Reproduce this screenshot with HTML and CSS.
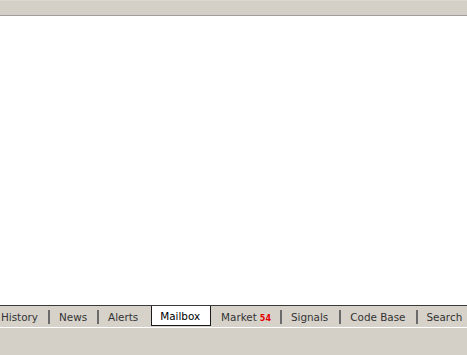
FILE: index.html
```html
<!DOCTYPE html>
<html>
<head>
<meta charset="utf-8">
<link rel="stylesheet" href="styles.css">
</head>
<body>
<div class="window">
  <div class="topbar"></div>
  <div class="content"></div>
  <div class="tabstrip">
    <span class="tab first">History</span>
    <span class="sep"></span>
    <span class="tab">News</span>
    <span class="sep"></span>
    <span class="tab alerts">Alerts</span>
    <span class="tab active">Mailbox</span>
    <span class="tab market">Market<span class="badge">54</span></span>
    <span class="sep"></span>
    <span class="tab signals">Signals</span>
    <span class="sep"></span>
    <span class="tab">Code Base</span>
    <span class="sep"></span>
    <span class="tab">Search</span>
  </div>
  <div class="bottom"></div>
</div>
</body>
</html>
```

FILE: styles.css
```css
html, body {
  margin: 0;
  padding: 0;
  height: 100%;
  overflow: hidden;
}
body {
  font-family: "DejaVu Sans", sans-serif;
  font-size: 10.4px;
  background: #d4d0c8;
}
.window {
  display: flex;
  flex-direction: column;
  height: 355px;
}
.topbar {
  height: 14px;
  background: #d4d0c8;
  border-top: 1px solid #dcd8d0;
  border-bottom: 1px solid #a09e9a;
}
.content {
  flex: 1;
  background: #ffffff;
}
.tabstrip {
  display: flex;
  align-items: center;
  height: 21px;
  border-top: 1px solid #3a3a3a;
  border-bottom: 1px solid #ffffff;
  background: #d6d2ca;
  white-space: nowrap;
  overflow: hidden;
}
.tab {
  display: flex;
  align-items: center;
  height: 21px;
  padding: 0 10px 0 9px;
  color: #333333;
  box-sizing: border-box;
}
.tab.first {
  padding-left: 1px;
}
.tab.alerts {
  padding-right: 13px;
}
.tab.active {
  align-self: flex-start;
  height: 20px;
  background: #ffffff;
  color: #000000;
  border: 1px solid #1a1a1a;
  border-top: none;
  padding: 0 10px 0 8px;
}
.tab.market {
  padding-left: 10px;
  padding-right: 9px;
}
.tab.signals {
  padding-right: 11px;
}
.badge {
  color: #e60000;
  font-weight: bold;
  font-size: 8px;
  margin-left: 3px;
  margin-top: 3px;
}
.sep {
  width: 2px;
  height: 14px;
  background: #6a6a6a;
  flex: none;
}
.bottom {
  height: 27px;
  background: #d4d0c8;
}
```
